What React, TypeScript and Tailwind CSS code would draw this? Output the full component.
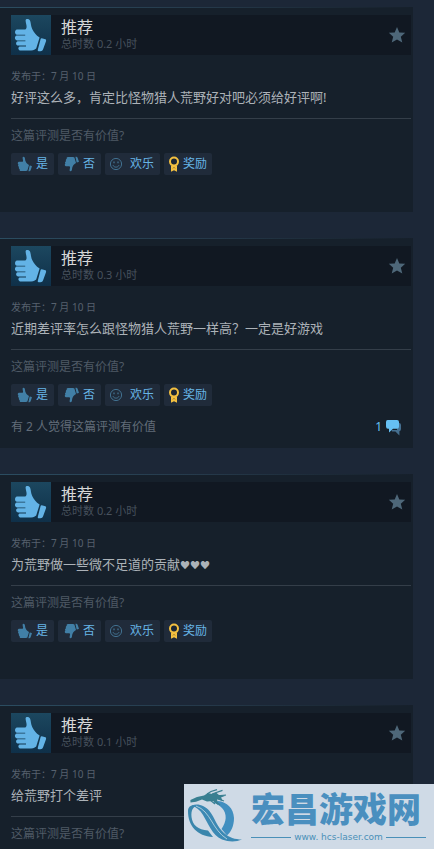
import type { ReactNode } from 'react';

type Review = {
  hours: string;
  date: string;
  text: string;
  hearts?: string;
  helpful?: string;
  comments?: number;
  canVote: boolean;
};

const reviews: Review[] = [
  { hours: '0.2', date: '7 月 10 日', text: '好评这么多，肯定比怪物猎人荒野好对吧必须给好评啊!', canVote: true },
  {
    hours: '0.3',
    date: '7 月 10 日',
    text: '近期差评率怎么跟怪物猎人荒野一样高？一定是好游戏',
    helpful: '有 2 人觉得这篇评测有价值',
    comments: 1,
    canVote: true,
  },
  { hours: '0.2', date: '7 月 10 日', text: '为荒野做一些微不足道的贡献', hearts: '♥♥♥', canVote: true },
  { hours: '0.1', date: '7 月 10 日', text: '给荒野打个差评', canVote: false },
];

const Thumb = ({ className }: { className?: string }) => (
  <svg viewBox="0 0 40 40" className={className} fill="currentColor" aria-hidden="true">
    <path d="M14.6 5.4C14.6 3.6 18.2 3.4 19.2 6C20 8.4 19.8 11 21.2 14C22.6 17 25 20.4 28.6 22.4L25.2 33.6C23.4 35.4 21 35.6 18 35.6H10.2C7 35.6 6.6 32.2 8.6 31.4H15V30.6H7.4C4.6 30.4 4.4 27 6.6 26.2H14.4V25.4H6C3.4 25.2 3.2 21.2 5.8 20.6H14.2V19.8H6C3.4 19.4 3.4 15 6 14.6H13.4C14.6 14.6 15.6 13.6 15.6 12C15.6 9.6 14.6 7.6 14.6 5.4Z" />
    <path d="M30.8 23.2L34.4 24.2C35.2 24.6 35.2 25.4 35 26.2L32.2 34C31.6 35.6 30.8 36.2 29.4 36.2H27.6C26.8 36.2 26.6 35.4 26.8 34.8L29.6 24C29.8 23.4 30.2 23 30.8 23.2Z" />
  </svg>
);

// solid fist, reads better at button size
const SmallThumb = ({ className }: { className?: string }) => (
  <svg viewBox="0 0 18 18" className={className} fill="currentColor" aria-hidden="true">
    <path d="M6.6 2.4C6.8 1.4 8.4 1.6 8.8 2.8C9.2 4.2 9 5.4 9.8 6.8C10.4 8 11.4 9.2 13 10L11.4 15.4C10.6 16 9.6 16 8.6 16H5C3.8 16 3.4 15 3.8 14.2C2.8 13.8 2.6 12.8 3 11.8C2 11.4 1.8 10.2 2.4 9.4C1.4 8.8 1.6 7 2.8 6.8H6.2C7 6.6 7.2 6 7 5.2C6.8 4.2 6.6 3.4 6.6 2.4Z" />
    <path d="M14 10.4L15.6 10.9C16 11 16 11.4 15.8 11.8L14.6 15.2C14.2 16 13.8 16.3 13 16.2H12.4L13.6 10.7Z" />
  </svg>
);

const Smiley = () => (
  <svg viewBox="0 0 14 14" className="w-[14px] h-[14px] text-[#41708f]" fill="none" stroke="currentColor" aria-hidden="true">
    <circle cx="7" cy="7" r="5.6" />
    <path d="M4 8.2C4.8 10.8 9.2 10.8 10 8.2" />
    <path d="M5 4.4V6.2M9 4.4V6.2" strokeWidth="1.3" />
  </svg>
);

const Award = () => (
  <svg viewBox="0 0 12 16" className="w-[12px] h-[16px]" aria-hidden="true">
    <path d="M3 10H9V15.8L6 14.2L3 15.8Z" fill="#f3c040" />
    <circle cx="6" cy="5.6" r="4" fill="#1c2633" stroke="#f3c040" strokeWidth="2" />
    <path d="M5 12.4L6 11.4L7 12.4" stroke="#8a6c25" fill="none" />
  </svg>
);

const Comments = () => (
  <svg viewBox="0 0 17 17" className="w-[17px] h-[17px]" aria-hidden="true">
    <path d="M12 4H14Q16 4 16 6V10Q16 12 14.4 12.2V16.4L10.4 12.6H7L6.6 11H12Z" fill="#456f90" />
    <path d="M2.6 1H12Q14 1 14 3V7.6Q14 9.8 12 9.8H8L4 13.6V9.8H3Q1 9.8 1 7.6V3Q1 1 2.6 1Z" fill="#66c0f4" />
  </svg>
);

const Star = () => (
  <svg viewBox="0 0 18 18" className="w-[18px] h-[18px]" fill="#4e6779" aria-hidden="true">
    <path d="M9 1L11.3 6.4L17.2 6.8L12.8 10.8L14.3 16.6L9 13.6L3.7 16.6L5.2 10.8L0.8 6.8L6.7 6.4Z" />
  </svg>
);

const VoteButton = ({ icon, className, children }: { icon: ReactNode; className: string; children: ReactNode }) => (
  <button
    type="button"
    className={`flex items-center h-[22px] rounded-xs bg-[#202b3a] text-xs text-[#67b5e6] whitespace-nowrap ${className}`}
  >
    {icon}
    <span>{children}</span>
  </button>
);

const VoteButtons = () => (
  <div className="flex gap-1 mt-2">
    <VoteButton className="pl-[5px] pr-[6px] gap-[2px]" icon={<SmallThumb className="w-[18px] h-[18px] text-[#417fa6]" />}>
      是
    </VoteButton>
    <VoteButton
      className="pl-[5px] pr-[6px] gap-[2px]"
      icon={<SmallThumb className="w-[18px] h-[18px] text-[#417fa6] -scale-y-100" />}
    >
      否
    </VoteButton>
    <VoteButton className="pl-1 pr-[6px] gap-[7px]" icon={<Smiley />}>
      欢乐
    </VoteButton>
    <VoteButton className="pl-1 pr-[5px] gap-[3px]" icon={<Award />}>
      奖励
    </VoteButton>
  </div>
);

const ReviewCard = ({ review }: { review: Review }) => (
  <article className="relative bg-[#16202b] pt-2 pb-3 pl-[11px] pr-[2px]">
    <div className="absolute inset-x-0 top-0 h-px bg-linear-to-r from-[#2b4d61] via-[#25394a] to-transparent" />
    <header className="flex items-center h-10 bg-[#111822]">
      <div className="w-10 h-10 shrink-0 bg-linear-to-b from-[#1c475f] to-[#0f3049]">
        <Thumb className="w-10 h-10 text-[#63b3e6]" />
      </div>
      <div className="flex-1 pl-[10px] pb-[2px]">
        <h2 className="text-base leading-5 text-[#d6d7d8]">推荐</h2>
        <p className="text-[11px] leading-[14px] text-[#47515d]">总时数 {review.hours} 小时</p>
      </div>
      <div className="pr-[5px]">
        <Star />
      </div>
    </header>
    <p className="mt-3 text-[10px] leading-[18px] text-[#56616e]">发布于：{review.date}</p>
    <p className="mt-[2px] text-[13px] leading-5 text-[#acb2b8]">
      {review.text}
      {review.hearts && <span className="text-[10px] leading-none">{review.hearts}</span>}
    </p>
    <hr className="mt-[11px] border-[#343e49]" />
    <p className="mt-2 text-xs leading-[18px] text-[#4f5a66]">这篇评测是否有价值?</p>
    {review.canVote && <VoteButtons />}
    <footer className="flex items-end justify-between min-h-[25px] text-xs leading-[18px] text-[#626d79]">
      {review.helpful && <p className="pt-3">{review.helpful}</p>}
      {review.comments && (
        <a href="#comments" className="flex items-center gap-[3px] pr-[9px] text-[#66c0f4]">
          {review.comments}
          <Comments />
        </a>
      )}
    </footer>
  </article>
);

const DragonLogo = () => (
  <svg viewBox="0 0 60 58" className="w-[60px] h-[58px] shrink-0" aria-hidden="true">
    <path d="M32 14C41 15 47.5 21 48 31C48 39 45 45 41 48.5L35.5 42C40.5 35 41.5 27 36 21C33 18 30 16.6 27 15.6Z" fill="#418fc0" />
    <path d="M2 24C2 19 7 16.5 12 19C7 19 5 23 5.5 30C6.5 38 12 43 22 43.5L27 50C11 49 2 39 2 24Z" fill="#3a86ac" />
    <path
      d="M6 18.5C12 16 19 19 23.5 24C29 31 31 40 38 46C43 50.5 49 52.5 56 52.5C50 55 43 55 36 52.5C26 48 22 36 17 28C14 23 10 20 6 18.5Z"
      fill="#3c89b4"
    />
    <path d="M10 19C25 24 26 43 41 52" stroke="#b4d2e0" strokeWidth="0.9" fill="none" />
    <path
      d="M4.5 15.4L4.4 13L11 10L18 8.4L22 6L26 7L30 5.5L33 8L40 8.5L35 10.5L37 14L31 12L32 18L27 14L21 14.5L16 12.5L10 14.8Z"
      fill="#397f91"
    />
    <path d="M21 7L25 4.5L31 2.6M26 7L36.5 3.4M29 9L40 8M29 11L38 14M27 12L34 18M24 13L29 17" stroke="#397f91" strokeWidth="1.2" fill="none" />
  </svg>
);

const SiteBanner = () => (
  <aside className="absolute bottom-0 right-0 flex items-start h-[65px] w-[250px] bg-[#cfdae6] pl-[2px] pt-[3px]">
    <DragonLogo />
    <div className="flex-1 pl-[5px] pr-2 pt-1">
      <p className="text-[34px] leading-9 font-black text-[#4a8fbf] whitespace-nowrap">宏昌游戏网</p>
      <div className="flex items-center gap-[3px] mt-1 text-[#4a90b8]">
        <span className="flex-1 h-px bg-[#4a90b8]" />
        <span className="font-['DejaVu_Sans'] text-[9px] leading-3 whitespace-nowrap">www. hcs-laser.com</span>
        <span className="flex-1 h-px bg-[#4a90b8]" />
      </div>
    </div>
  </aside>
);

const App = () => (
  <main className="relative h-screen overflow-hidden bg-[#1c2737] font-['Noto_Sans','Noto_Sans_CJK_SC',sans-serif]">
    <div className="flex flex-col gap-[26px] pt-[7px] pr-[21px]">
      {reviews.map((review, i) => (
        <ReviewCard key={i} review={review} />
      ))}
    </div>
    <SiteBanner />
  </main>
);

export default App;
